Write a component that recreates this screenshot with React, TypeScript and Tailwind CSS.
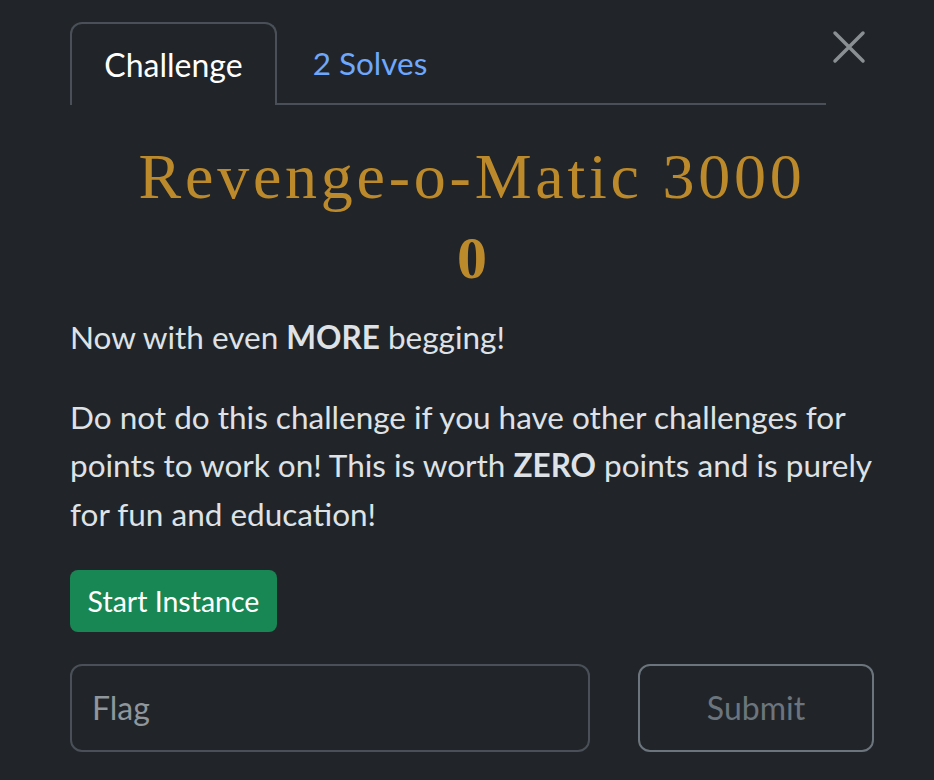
import React from "react";

export default function App() {
  return (
    <div className="w-[934px] h-[780px] bg-[#212529] text-[#dee2e6] overflow-hidden" style={{ fontFamily: "Lato, 'Noto Sans', sans-serif" }}>
      <div className="pl-[70px] pr-[60px] pt-[22px]">
        <div className="flex items-start">
          <div className="flex w-[756px] border-b-2 border-[#495057]">
            <div className="w-[207px] h-[83px] -mb-[2px] border-2 border-b-0 border-[#495057] rounded-t-[12px] bg-[#212529] flex items-center justify-center text-[32px] text-white">
              Challenge
            </div>
            <div className="w-[186px] h-[81px] pt-[3px] flex items-center justify-center text-[31.5px] text-[#6ea8fe]">
              2 Solves
            </div>
          </div>
          <div className="ml-[6px] mt-[8px] w-[34px] h-[34px] flex items-center justify-center">
            <svg width="34" height="34" viewBox="0 0 34 34" fill="none" stroke="#8a8f94" strokeWidth="3.5" strokeLinecap="round">
              <path d="M3 3 L31 31 M31 3 L3 31" />
            </svg>
          </div>
        </div>

        <div className="w-[804px] mt-[36px] text-center text-[#bd8a2b]" style={{ fontFamily: "'Liberation Serif', 'Times New Roman', serif" }}>
          <div className="text-[64px] leading-[72px] tracking-[3.75px]">Revenge-o-Matic 3000</div>
          <div className="text-[60px] leading-[64px] font-bold mt-[13px]">0</div>
        </div>

        <div className="w-[804px] mt-[23px] text-[31.5px] leading-[48.5px]">
          <p>
            Now with even <b>MORE</b> begging!
          </p>
          <p className="mt-[31px]">
            Do not do this challenge if you have other challenges for points to work on! This is worth <b>ZERO</b> points and is purely for fun and education!
          </p>
        </div>

        <button className="mt-[32px] h-[62px] w-[207px] rounded-[8px] bg-[#198754] text-white text-[28.5px] flex items-center justify-center">
          Start Instance
        </button>

        <div className="w-[804px] mt-[32px] flex gap-[48px]">
          <div className="w-[520px] h-[88px] border-2 border-[#495057] rounded-[12px] flex items-center pl-[20px] text-[32px] text-[#8f969c]">
            Flag
          </div>
          <div className="w-[236px] h-[88px] border-2 border-[#6c757d] rounded-[12px] flex items-center justify-center text-[32px] text-[#6c757d]">
            Submit
          </div>
        </div>
      </div>
    </div>
  );
}
